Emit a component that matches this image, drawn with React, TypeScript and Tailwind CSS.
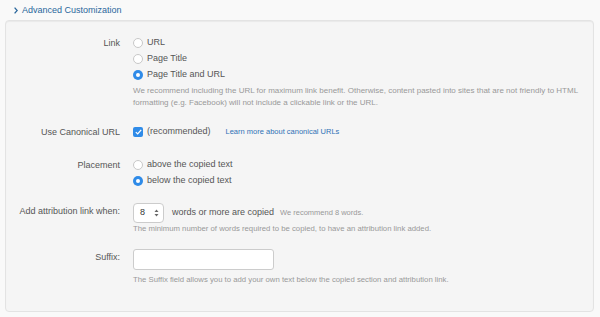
import React from "react";

function Radio({ checked, label }: { checked?: boolean; label: string }) {
  return (
    <label className="flex h-[16px] items-center gap-[4px]">
      {checked ? (
        <span className="flex h-[10px] w-[10px] items-center justify-center rounded-full bg-[#2f8be8]">
          <span className="h-[4px] w-[4px] rounded-full bg-white" />
        </span>
      ) : (
        <span className="h-[10px] w-[10px] rounded-full border border-[#c8c8c8] bg-white" />
      )}
      <span>{label}</span>
    </label>
  );
}

function Row({ label, children, className = "" }: { label: string; children: React.ReactNode; className?: string }) {
  return (
    <div className={"flex " + className}>
      <div className="w-[114px] shrink-0 text-right leading-[16px]">{label}</div>
      <div className="ml-[13px] flex-1">{children}</div>
    </div>
  );
}

export default function App() {
  return (
    <div
      className="h-[317px] w-[600px] overflow-hidden bg-[#f9f9f9] text-[9px] text-[#555]"
      style={{ fontFamily: '"Liberation Sans", Arial, sans-serif' }}
    >
      <div className="flex h-[20px] items-center gap-[4px] pl-[14px] pt-[1px] text-[#2a679c]">
        <svg width="4" height="7" viewBox="0 0 4 7" fill="none">
          <path d="M0.6 0.6 L3.2 3.5 L0.6 6.4" stroke="#2a679c" strokeWidth="1.3" />
        </svg>
        <span>Advanced Customization</span>
      </div>

      <div className="ml-[5px] h-[292px] w-[589px] rounded-[4px] border border-[#e3e3e3] bg-[#f5f5f5] pt-[14px] shadow-[inset_0_1px_1px_rgba(0,0,0,0.05)]">
        <Row label="Link">
          <Radio label="URL" />
          <Radio label="Page Title" />
          <Radio checked label="Page Title and URL" />
          <p className="mt-[2px] text-[8px] leading-[12px] text-[#999]">
            We recommend including the URL for maximum link benefit. Otherwise, content pasted into sites that are not friendly to HTML
            <br />
            formatting (e.g. Facebook) will not include a clickable link or the URL.
          </p>
        </Row>

        <Row label="Use Canonical URL" className="mt-[15px]">
          <div className="flex h-[16px] items-center">
            <span className="flex h-[10px] w-[10px] items-center justify-center rounded-[2px] bg-[#2f8be8]">
              <svg width="7" height="6" viewBox="0 0 7 6" fill="none">
                <path d="M0.8 3.1 L2.7 4.9 L6.2 0.9" stroke="white" strokeWidth="1.3" />
              </svg>
            </span>
            <span className="ml-[4px]">(recommended)</span>
            <a className="ml-[15px] text-[7.5px] text-[#2f72b5]">Learn more about canonical URLs</a>
          </div>
        </Row>

        <Row label="Placement" className="mt-[17px]">
          <Radio label="above the copied text" />
          <Radio checked label="below the copied text" />
        </Row>

        <Row label="Add attribution link when:" className="mt-[14px]">
          <div className="flex h-[20px] items-center">
            <div className="flex h-[20px] w-[31px] items-center justify-between rounded-[4px] border border-[#ccc] bg-white pl-[6px] pr-[4px] text-[#333]">
              <span>8</span>
              <svg width="5" height="8" viewBox="0 0 5 8">
                <path d="M2.5 0.5 L4.5 3 L0.5 3 Z" fill="#666" />
                <path d="M2.5 7.5 L4.5 5 L0.5 5 Z" fill="#666" />
              </svg>
            </div>
            <span className="ml-[8px]">words or more are copied</span>
            <span className="ml-[6px] text-[7.5px] text-[#999]">We recommend 8 words.</span>
          </div>
          <p className="text-[7.75px] leading-[12px] text-[#999]">
            The minimum number of words required to be copied, to have an attribution link added.
          </p>
        </Row>

        <Row label="Suffix:" className="mt-[14px]">
          <div className="h-[21px] w-[141px] rounded-[3px] border border-[#ccc] bg-white" />
          <p className="mt-[4px] text-[7.75px] leading-[12px] text-[#999]">
            The Suffix field allows you to add your own text below the copied section and attribution link.
          </p>
        </Row>
      </div>
    </div>
  );
}
